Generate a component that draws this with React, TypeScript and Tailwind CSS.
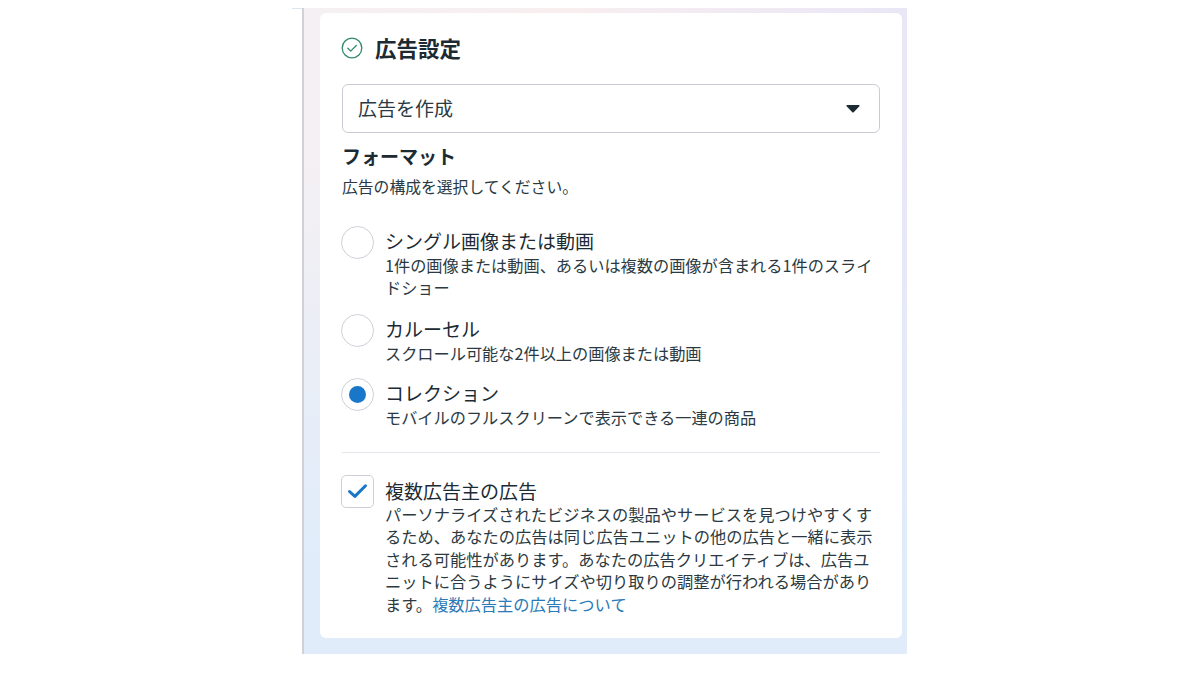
import React from 'react';

const FONT = "font-['Noto_Sans_CJK_JP','Noto_Sans',sans-serif]";

const formats = [
  {
    title: 'シングル画像または動画',
    desc: '1件の画像または動画、あるいは複数の画像が含まれる1件のスライドショー',
    selected: false,
    gap: 'mb-[14px]',
  },
  {
    title: 'カルーセル',
    desc: 'スクロール可能な2件以上の画像または動画',
    selected: false,
    gap: 'mb-[13px]',
  },
  {
    title: 'コレクション',
    desc: 'モバイルのフルスクリーンで表示できる一連の商品',
    selected: true,
    gap: '',
  },
];

function FormatOption({ title, desc, selected, gap }: { title: string; desc: string; selected: boolean; gap: string }) {
  return (
    <div className={`flex gap-[11px] -ml-[1px] ${gap}`}>
      <div className="w-[33px] h-[33px] mt-[1px] shrink-0 rounded-full border-[1.5px] border-[#ccd0d6] bg-white flex items-center justify-center">
        {selected && <div className="w-[17px] h-[17px] rounded-full bg-[#1877c9]" />}
      </div>
      <div className="w-[495px]">
        <div className="text-[19px] leading-[28px] text-[#1c2b33] mt-[2px]">{title}</div>
        <div className="text-[16.2px] leading-[22.4px] text-[#2b3a42] -mt-[1px]">{desc}</div>
      </div>
    </div>
  );
}

export default function App() {
  return (
    <div className={`w-[1200px] h-[679px] bg-white pt-[8px] pl-[292px] flex items-start overflow-hidden ${FONT}`}>
      <div className="w-[10px] h-[1px] bg-[#dbe6f0] shrink-0" />
      <div className="w-[605px] h-[646px] border-l-2 border-[#d0d2d8] pt-[5px] pl-[16px] bg-[linear-gradient(to_bottom,rgba(224,236,250,0)_20%,#e0ecfa_85%),linear-gradient(to_right,#f5f0f3_0%,#f8eef0_45%,#e9e6f6_100%)]">
        <div className="w-[582px] h-[625px] rounded-[6px] bg-white px-[22px] pt-[20px]">
          {/* Header */}
          <div className="flex items-center gap-[12px] h-[30px] -ml-[1px]">
            <svg width="22" height="22" viewBox="0 0 22 22" fill="none">
              <circle cx="11" cy="11" r="9.8" stroke="#2f8a6b" strokeWidth="1.3" />
              <path d="M6.8 11.3l2.9 2.8 5.6-5.6" stroke="#2f8a6b" strokeWidth="1.3" strokeLinecap="round" strokeLinejoin="round" />
            </svg>
            <h2 className="text-[21.5px] leading-[30px] font-bold text-[#1c2b33]">広告設定</h2>
          </div>

          {/* Select */}
          <div className="mt-[21px] h-[49px] rounded-[6px] border-[1.5px] border-[#cbccd3] flex items-center justify-between pl-[15px] pr-[19px]">
            <span className="text-[19px] text-[#2b3a42]">広告を作成</span>
            <svg width="14" height="10" viewBox="0 0 14 10">
              <path d="M1.2 1h11.6c.7 0 1.1.8.6 1.3L7.7 8.2c-.4.4-1 .4-1.4 0L.6 2.3C.1 1.8.5 1 1.2 1z" fill="#1c2b33" />
            </svg>
          </div>

          {/* Format */}
          <h3 className="mt-[9px] text-[19px] leading-[28px] font-bold text-[#1c2b33]">フォーマット</h3>
          <p className="mt-[4px] text-[15.8px] leading-[26px] text-[#2b3a42]">広告の構成を選択してください。</p>

          <div className="mt-[25px]">
            {formats.map((f) => (
              <FormatOption key={f.title} {...f} />
            ))}
          </div>

          <div className="mt-[23px] h-[1px] bg-[#e4e6eb]" />

          {/* Multi-advertiser */}
          <div className="mt-[21px] flex gap-[11px] -ml-[1px]">
            <div className="w-[33px] h-[33px] mt-[1px] shrink-0 rounded-[5px] border-[1.5px] border-[#ccd0d6] bg-white flex items-center justify-center">
              <svg width="21" height="16" viewBox="0 0 21 16" fill="none">
                <path d="M2.5 8.5l5.4 4.9L18.5 2.8" stroke="#1877c9" strokeWidth="3" strokeLinecap="round" strokeLinejoin="round" />
              </svg>
            </div>
            <div className="w-[495px]">
              <div className="text-[19px] leading-[28px] text-[#1c2b33] mt-[3px]">複数広告主の広告</div>
              <p className="text-[16.25px] leading-[22.5px] text-[#2b3a42] -mt-[2px]">
                パーソナライズされたビジネスの製品やサービスを見つけやすくするため、あなたの広告は同じ広告ユニットの他の広告と一緒に表示される可能性があります。あなたの広告クリエイティブは、広告ユニットに合うようにサイズや切り取りの調整が行われる場合があります。
                <span className="text-[#2a7ab8]">複数広告主の広告について</span>
              </p>
            </div>
          </div>
        </div>
      </div>
    </div>
  );
}
